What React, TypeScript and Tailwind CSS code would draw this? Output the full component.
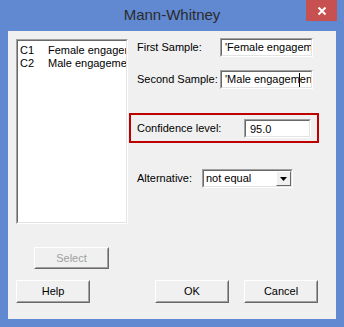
import { ReactNode } from "react"

const font = { fontFamily: '"Liberation Sans", Arial, sans-serif' }

function Sunken({ className, children }: { className: string; children?: ReactNode }) {
  return (
    <div className={`shrink-0 border border-t-[#a0a0a0] border-l-[#a0a0a0] border-b-white border-r-white ${className}`}>
      <div className="h-full w-full overflow-hidden border border-t-[#696969] border-l-[#696969] border-b-[#e3e3e3] border-r-[#e3e3e3] bg-white">
        {children}
      </div>
    </div>
  )
}

function Button({ label, className, disabled }: { label: string; className: string; disabled?: boolean }) {
  return (
    <div className={`shrink-0 border border-t-white border-l-white border-b-[#696969] border-r-[#696969] ${className}`}>
      <div
        className={`flex h-full w-full items-center justify-center border border-t-[#f0f0f0] border-l-[#f0f0f0] border-b-[#a0a0a0] border-r-[#a0a0a0] bg-[#f0f0f0] text-[11px] ${
          disabled ? "text-[#a0a0a0]" : "text-black"
        }`}
      >
        {label}
      </div>
    </div>
  )
}

export default function App() {
  return (
    <div className="flex h-[327px] w-[344px] flex-col bg-[#6189d1] text-black" style={font}>
      {/* title bar */}
      <div className="relative flex h-[31px] items-center justify-center">
        <span className="text-[15px] text-[#2b2b2b]">Mann-Whitney</span>
        <div className="absolute right-[7px] top-0 flex h-[21px] w-[31px] items-center justify-center bg-[#c75050]">
          <svg width="10" height="10" viewBox="0 0 10 10">
            <path d="M1.5 1.5 L8.5 8.5 M8.5 1.5 L1.5 8.5" stroke="white" strokeWidth="2" />
          </svg>
        </div>
      </div>

      {/* client area */}
      <div className="mx-[8px] h-[288px] bg-[#f0f0f0] text-[11px]">
        <div className="flex pl-[8px] pt-[8px]">
          <Sunken className="h-[185px] w-[112px]">
            <div className="pl-[2px] pt-[3px] leading-[13px]">
              <div className="flex whitespace-nowrap">
                <span className="w-[28px] shrink-0">C1</span>
                <span>Female engagement</span>
              </div>
              <div className="flex whitespace-nowrap">
                <span className="w-[28px] shrink-0">C2</span>
                <span>Male engagement</span>
              </div>
            </div>
          </Sunken>

          <div className="ml-[1px] flex flex-col">
            <div className="-mt-[1px] flex items-center">
              <span className="ml-[8px] w-[83px] shrink-0 whitespace-nowrap">First Sample:</span>
              <Sunken className="h-[19px] w-[93px]">
                <div className="whitespace-nowrap pl-[3px] leading-[15px]">'Female engagement'</div>
              </Sunken>
            </div>
            <div className="mt-[13px] flex items-center">
              <span className="ml-[8px] w-[83px] shrink-0 whitespace-nowrap">Second Sample:</span>
              <Sunken className="h-[19px] w-[93px]">
                <div className="relative whitespace-nowrap pl-[3px] leading-[15px]">
                  'Male engagement'
                  <span className="absolute left-[77px] top-[1px] h-[14px] w-[1px] bg-black" />
                </div>
              </Sunken>
            </div>

            <div className="mt-[24px] flex h-[30px] w-[190px] items-center border-2 border-[#c00000]">
              <span className="ml-[6px] w-[107px] shrink-0">Confidence level:</span>
              <Sunken className="h-[19px] w-[67px]">
                <div className="pl-[4px] leading-[16px]">95.0</div>
              </Sunken>
            </div>

            <div className="mt-[26px] flex items-center">
              <span className="ml-[8px] w-[65px] shrink-0">Alternative:</span>
              <Sunken className="h-[19px] w-[91px]">
                <div className="flex h-full items-center justify-between">
                  <span className="pl-[2px]">not equal</span>
                  <div className="flex h-full w-[15px] items-center justify-center border border-t-white border-l-white border-b-[#696969] border-r-[#696969] bg-[#f0f0f0]">
                    <svg width="7" height="4" viewBox="0 0 7 4">
                      <path d="M0 0 H7 L3.5 4 Z" fill="black" />
                    </svg>
                  </div>
                </div>
              </Sunken>
            </div>
          </div>
        </div>

        <div className="ml-[26px] mt-[23px]">
          <Button label="Select" className="h-[22px] w-[75px]" disabled />
        </div>

        <div className="mt-[11px] flex pl-[8px]">
          <Button label="Help" className="h-[23px] w-[74px]" />
          <Button label="OK" className="ml-[65px] h-[23px] w-[74px]" />
          <Button label="Cancel" className="ml-[15px] h-[23px] w-[74px]" />
        </div>
      </div>
    </div>
  )
}
